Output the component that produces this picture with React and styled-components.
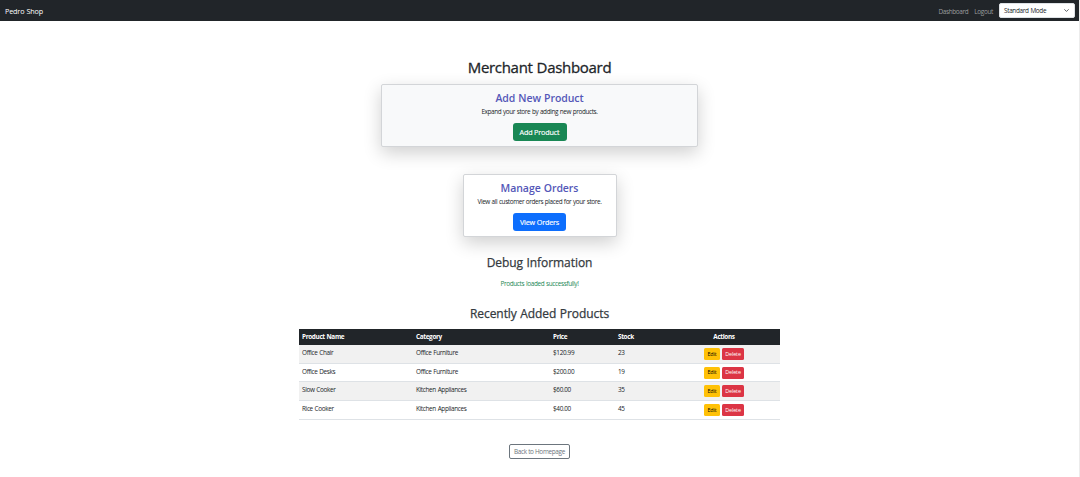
import React from "react";
import styled, { createGlobalStyle } from "styled-components";

const Global = createGlobalStyle`
  * { box-sizing: border-box; }
  body {
    margin: 0;
    background: #fff;
    color: #212529;
    font-family: "Open Sans", "Noto Sans", sans-serif;
    font-size: 6.4px;
    line-height: 9px;
    letter-spacing: -0.34px;
    word-spacing: 0.4px;
    overflow: hidden;
  }
  h1, h2, h3, p { margin: 0; }
`;

const Page = styled.div`
  height: 477px;
  border-right: 1px solid #ececec;
`;

const Navbar = styled.nav`
  height: 21px;
  padding: 0 4px 0 5px;
  display: flex;
  align-items: center;
  background: #212529;
`;

const Brand = styled.a`
  color: #fff;
  font-size: 7.2px;
  letter-spacing: -0.13px;
  margin: 2px auto 0 0;
`;

const NavLink = styled.a`
  color: #9b9d9f;
  margin: 1px 6px 0 0;
`;

const ModeSelect = styled.div`
  width: 76px;
  height: 15px;
  padding: 0 5px 0 4px;
  display: flex;
  align-items: center;
  justify-content: space-between;
  background: #fff;
  border: 1px solid #dee2e6;
  border-radius: 2px;
  letter-spacing: -0.32px;
`;

const Main = styled.main`
  display: flex;
  flex-direction: column;
  align-items: center;
  padding-top: 36px;
`;

const Title = styled.h1`
  font-size: 15px;
  line-height: 20px;
  font-weight: 400;
  -webkit-text-stroke: 0.3px currentColor;
  letter-spacing: -0.3px;
`;

const Card = styled.section`
  width: ${(p) => p.$width};
  height: 63px;
  margin-top: ${(p) => p.$gap};
  padding-top: 6px;
  display: flex;
  flex-direction: column;
  align-items: center;
  background: ${(p) => p.$background};
  border: 1px solid #d3d5d8;
  border-radius: 2px;
  box-shadow: 0 6px 18px rgba(0, 0, 0, 0.19);
`;

const CardTitle = styled.h2`
  font-size: 10.5px;
  line-height: 14px;
  font-weight: 600;
  color: #5457b8;
  letter-spacing: -0.06px;
`;

const CardText = styled.p`
  margin-top: 2px;
  letter-spacing: -0.38px;
`;

const CardButton = styled.button`
  width: ${(p) => p.$width};
  height: 18px;
  margin-top: 6.5px;
  padding: 0;
  border: 0;
  border-radius: 3px;
  background: ${(p) => p.$color};
  color: #fff;
  font: 400 7.2px/18px "Open Sans", sans-serif;
  letter-spacing: -0.15px;
  -webkit-text-stroke: 0.15px currentColor;
`;

const SectionTitle = styled.h3`
  margin-top: ${(p) => p.$gap};
  font-size: 12px;
  line-height: 16px;
  font-weight: 400;
  -webkit-text-stroke: 0.25px currentColor;
  color: #343a40;
  letter-spacing: -0.06px;
`;

const Status = styled.p`
  margin-top: 8px;
  color: #198754;
`;

const Table = styled.table`
  width: 481px;
  margin-top: 7px;
  border-collapse: separate;
  border-spacing: 0;
  table-layout: fixed;
`;

const HeadCell = styled.th`
  width: ${(p) => p.$width};
  height: 16px;
  padding: 0 3px 1px;
  background: #212529;
  color: #fff;
  font-weight: 700;
  text-align: ${(p) => p.$align || "left"};
`;

const Row = styled.tr`
  background: ${(p) => (p.$striped ? "#f1f1f1" : "#fff")};
`;

const Cell = styled.td`
  height: 18.7px;
  padding: 3px 3px 0;
  border-bottom: 1px solid #dee2e6;
  vertical-align: top;
`;

const Actions = styled.div`
  display: flex;
  justify-content: center;
  gap: 2px;
`;

const SmallButton = styled.button`
  width: ${(p) => p.$width};
  height: 12px;
  padding: 0;
  border: 0;
  border-radius: 1.5px;
  background: ${(p) => p.$background};
  color: ${(p) => p.$color};
  font: 5.4px/11px "Open Sans", sans-serif;
  letter-spacing: -0.1px;
`;

const HomeButton = styled.button`
  width: 61px;
  height: 15px;
  margin-top: 24px;
  padding: 0;
  border: 1px solid #6c757d;
  border-radius: 2px;
  background: #fff;
  color: #6c757d;
  font: 6.4px/14px "Open Sans", sans-serif;
  letter-spacing: -0.32px;
`;

const products = [
  ["Office Chair", "Office Furniture", "$120.99", "23"],
  ["Office Desks", "Office Furniture", "$200.00", "19"],
  ["Slow Cooker", "Kitchen Appliances", "$60.00", "35"],
  ["Rice Cooker", "Kitchen Appliances", "$40.00", "45"],
];

export default function App() {
  return (
    <Page>
      <Global />
      <Navbar>
        <Brand>Pedro Shop</Brand>
        <NavLink>Dashboard</NavLink>
        <NavLink>Logout</NavLink>
        <ModeSelect>
          Standard Mode
          <svg width="5" height="5" viewBox="0 0 16 16" fill="none" stroke="#343a40" strokeWidth="2.5" strokeLinecap="round" strokeLinejoin="round">
            <path d="m2 5 6 6 6-6" />
          </svg>
        </ModeSelect>
      </Navbar>
      <Main>
        <Title>Merchant Dashboard</Title>
        <Card $width="317px" $gap="7px" $background="#f8f9fa">
          <CardTitle>Add New Product</CardTitle>
          <CardText>Expand your store by adding new products.</CardText>
          <CardButton $width="54px" $color="#198754">Add Product</CardButton>
        </Card>
        <Card $width="154px" $gap="27px" $background="#fff">
          <CardTitle>Manage Orders</CardTitle>
          <CardText>View all customer orders placed for your store.</CardText>
          <CardButton $width="53px" $color="#0d6efd">View Orders</CardButton>
        </Card>
        <SectionTitle $gap="18px">Debug Information</SectionTitle>
        <Status>Products loaded successfully!</Status>
        <SectionTitle $gap="18px">Recently Added Products</SectionTitle>
        <Table>
          <thead>
            <tr>
              <HeadCell $width="114px">Product Name</HeadCell>
              <HeadCell $width="137px">Category</HeadCell>
              <HeadCell $width="65px">Price</HeadCell>
              <HeadCell $width="53px">Stock</HeadCell>
              <HeadCell $align="center">Actions</HeadCell>
            </tr>
          </thead>
          <tbody>
            {products.map((product, i) => (
              <Row key={product[0]} $striped={i % 2 === 0}>
                {product.map((value, j) => (
                  <Cell key={j}>{value}</Cell>
                ))}
                <Cell>
                  <Actions>
                    <SmallButton $width="16px" $background="#ffc107" $color="#000">Edit</SmallButton>
                    <SmallButton $width="22px" $background="#dc3545" $color="#fff">Delete</SmallButton>
                  </Actions>
                </Cell>
              </Row>
            ))}
          </tbody>
        </Table>
        <HomeButton>Back to Homepage</HomeButton>
      </Main>
    </Page>
  );
}
